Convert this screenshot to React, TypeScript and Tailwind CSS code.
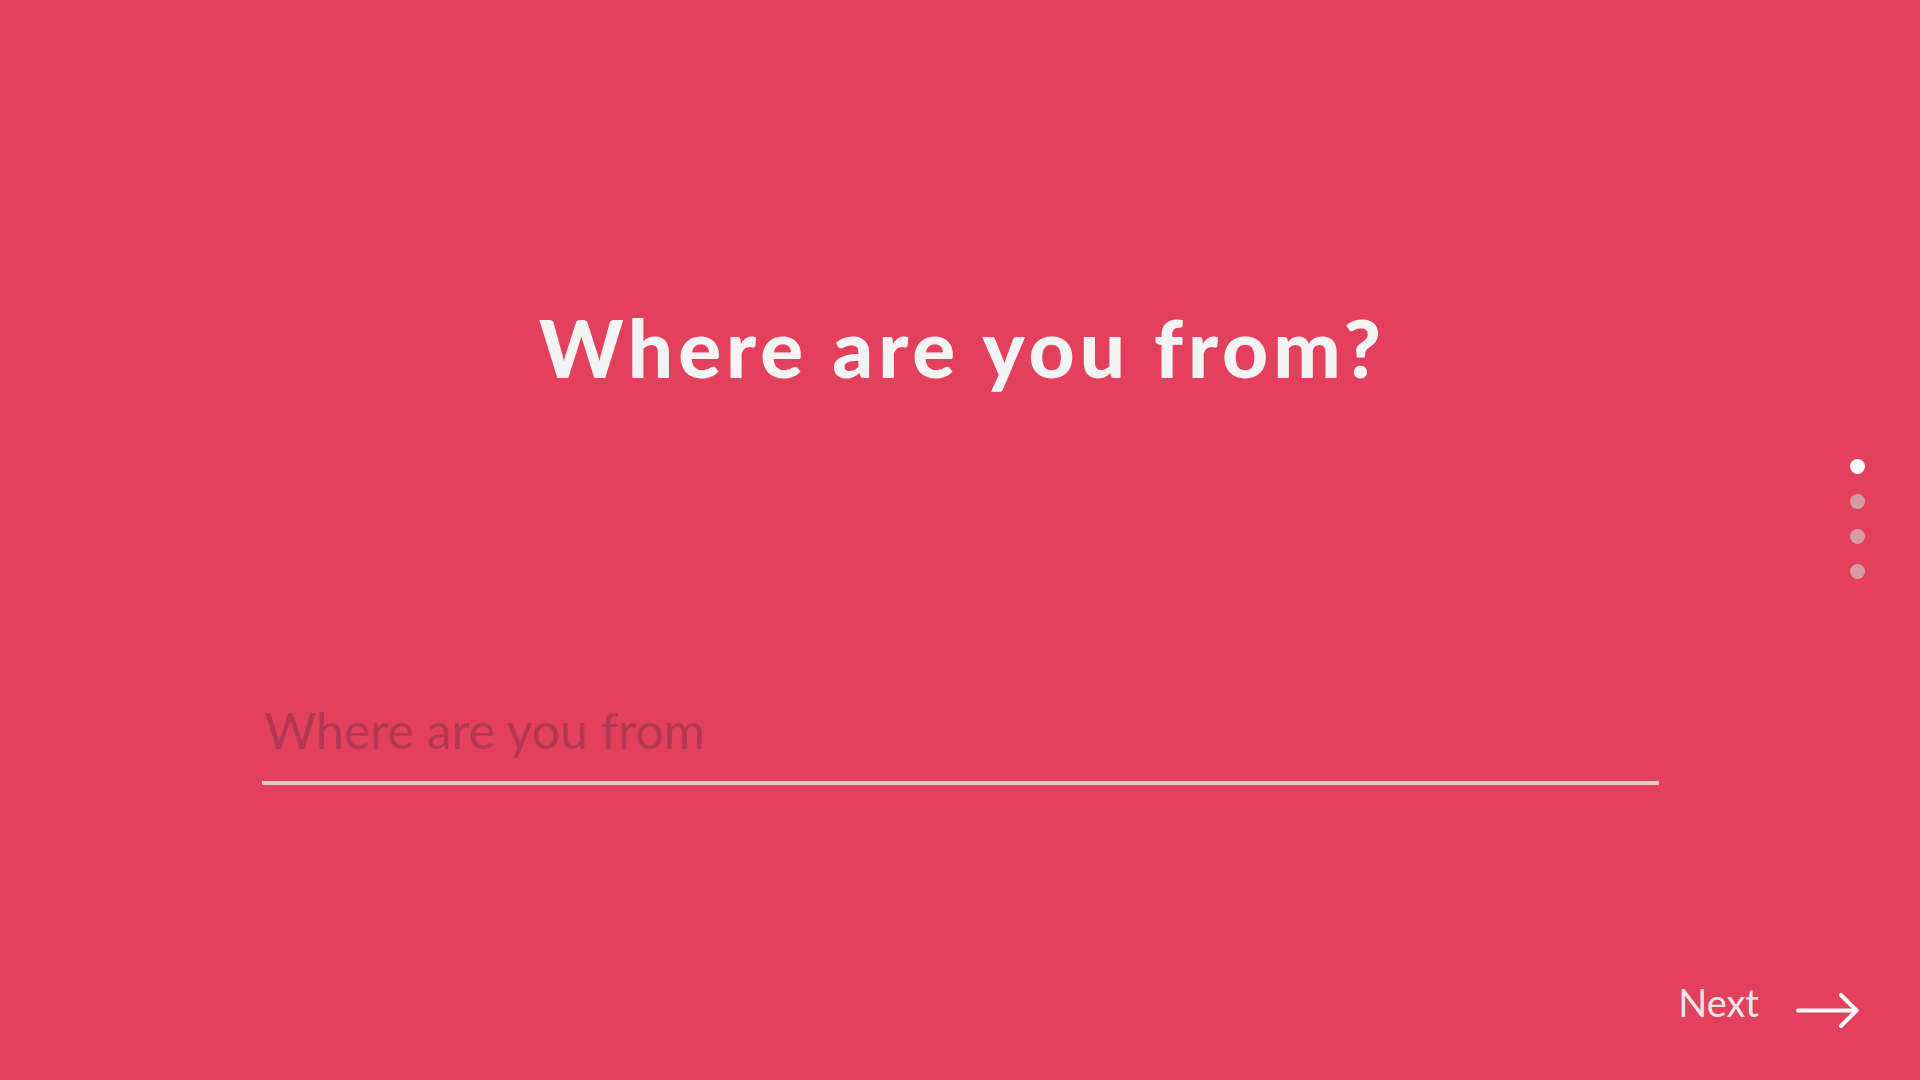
import { useState } from "react";

const steps = [0, 1, 2, 3];

export default function App() {
  const [value, setValue] = useState("");

  return (
    <div className="relative min-h-screen w-full overflow-hidden bg-[#e2405c] font-['Lato','Noto_Sans',sans-serif]">
      <main className="flex flex-col items-center pt-[307px]">
        <h1 className="pl-[5px] text-[80px] font-black leading-none tracking-[5px] text-[#f4f4f4]">
          Where are you from?
        </h1>

        <div className="mt-[315px] w-[1397px] border-b-4 border-[#eec3ca] pb-[23px]">
          <input
            type="text"
            value={value}
            onChange={(e) => setValue(e.target.value)}
            placeholder="Where are you from"
            className="block h-[56px] w-full bg-transparent p-0 pl-[3px] text-[50px] leading-[56px] text-white outline-none placeholder:text-[#b43853]"
          />
        </div>
      </main>

      {/* step indicator */}
      <nav className="absolute right-[55px] top-[459px] flex flex-col gap-5">
        {steps.map((i) => (
          <span
            key={i}
            className={
              i === 0
                ? "block h-[15px] w-[15px] rounded-full bg-white"
                : "block h-[15px] w-[15px] rounded-full bg-[#d69aa5]"
            }
          />
        ))}
      </nav>

      <button
        type="button"
        className="absolute bottom-[52px] right-[61px] flex items-start gap-[37px] text-[38px] leading-none text-[#e8e8e8]"
      >
        <span className="mt-[2px]">Next</span>
        <svg
          width="63"
          height="35"
          viewBox="0 0 63 35"
          fill="none"
          stroke="#fafafa"
          strokeWidth="4"
          strokeLinecap="round"
          strokeLinejoin="round"
          className="mt-[12px]"
        >
          <path d="M2 17.5H60" />
          <path d="M45 2L60.5 17.5L45 33" />
        </svg>
      </button>
    </div>
  );
}
